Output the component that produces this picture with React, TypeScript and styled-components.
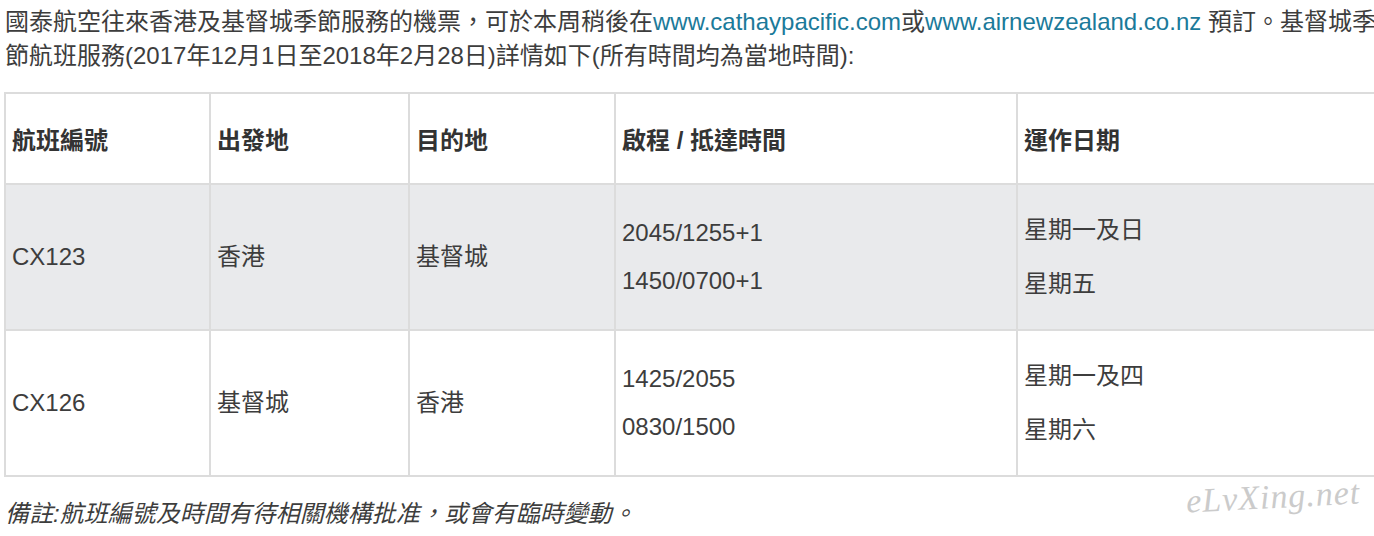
import React from 'react'
import styled, { createGlobalStyle } from 'styled-components'

const GlobalStyle = createGlobalStyle`
  html, body {
    margin: 0;
    padding: 0;
    overflow: hidden;
    background: #fff;
  }
  body {
    font-family: "Liberation Sans", "Noto Sans CJK TC", sans-serif;
    color: #3d3d3d;
  }
`

interface IFlight {
  code: string
  from: string
  to: string
  times: string[]
  days: string[]
  shaded?: boolean
}

const flights: IFlight[] = [
  {
    code: 'CX123',
    from: '香港',
    to: '基督城',
    times: ['2045/1255+1', '1450/0700+1'],
    days: ['星期一及日', '星期五'],
    shaded: true,
  },
  {
    code: 'CX126',
    from: '基督城',
    to: '香港',
    times: ['1425/2055', '0830/1500'],
    days: ['星期一及四', '星期六'],
  },
]

const headings = ['航班編號', '出發地', '目的地', '啟程 / 抵達時間', '運作日期']
const colWidths = [205, 199, 206, 402, 368]

/**
 * Seasonal flight notice
 */
const App = () => {
  return (
    <Page>
      <GlobalStyle />
      <Intro>
        國泰航空往來香港及基督城季節服務的機票，可於本周稍後在
        <Link href="#">www.cathaypacific.com</Link>或
        <Link href="#">www.airnewzealand.co.nz</Link> 預訂。基督城季
        <br />
        節航班服務(2017年12月1日至2018年2月28日)詳情如下(所有時間均為當地時間):
      </Intro>
      <Table>
        <colgroup>
          {colWidths.map((w, i) => (
            <col key={i} style={{ width: w }} />
          ))}
        </colgroup>
        <thead>
          <tr>
            {headings.map((h) => (
              <HeadCell key={h}>{h}</HeadCell>
            ))}
          </tr>
        </thead>
        <tbody>
          {flights.map((f) => (
            <Row key={f.code} shaded={f.shaded}>
              <Cell>{f.code}</Cell>
              <Cell>{f.from}</Cell>
              <Cell>{f.to}</Cell>
              <Cell>
                {f.times.map((t) => (
                  <Line key={t} step={48}>
                    {t}
                  </Line>
                ))}
              </Cell>
              <Cell>
                {f.days.map((d) => (
                  <Line key={d} step={54}>
                    {d}
                  </Line>
                ))}
              </Cell>
            </Row>
          ))}
        </tbody>
      </Table>
      <Footer>
        <Note>備註:航班編號及時間有待相關機構批准，或會有臨時變動。</Note>
        <Watermark>eLvXing.net</Watermark>
      </Footer>
    </Page>
  )
}

const Page = styled.div`
  width: 1374px;
  padding-top: 5px;
`

const Intro = styled.p`
  margin: 0;
  padding-left: 5px;
  font-size: 24px;
  line-height: 34px;
  white-space: nowrap;
`

const Link = styled.a`
  color: #1b7a9a;
  text-decoration: none;
`

const Table = styled.table`
  margin: 19px 0 0 4px;
  width: 1380px;
  table-layout: fixed;
  border-collapse: collapse;
  font-size: 24px;
`

const HeadCell = styled.th`
  height: 89px;
  padding: 0 6px;
  border: 2px solid #dcdcdc;
  text-align: left;
  vertical-align: middle;
  font-weight: bold;
  color: #333;
`

const Row = styled.tr<{ shaded?: boolean }>`
  background: ${({ shaded }) => (shaded ? '#e9eaec' : '#fff')};
`

const Cell = styled.td`
  height: 144px;
  padding: 0 6px;
  border: 2px solid #dcdcdc;
  vertical-align: middle;
  line-height: 34px;
`

const Line = styled.div<{ step: number }>`
  line-height: ${({ step }) => step}px;
`

const Footer = styled.div`
  position: relative;
  margin-top: 20px;
  height: 40px;
`

const Note = styled.p`
  margin: 0;
  padding-left: 5px;
  font-size: 24px;
  line-height: 34px;
  font-style: italic;
`

const Watermark = styled.span`
  position: absolute;
  right: 14px;
  top: -20px;
  line-height: 40px;
  font-family: "Liberation Serif", serif;
  font-style: italic;
  font-size: 34px;
  letter-spacing: 1px;
  color: #cbcbcb;
  transform: rotate(-3deg);
`

export default App
